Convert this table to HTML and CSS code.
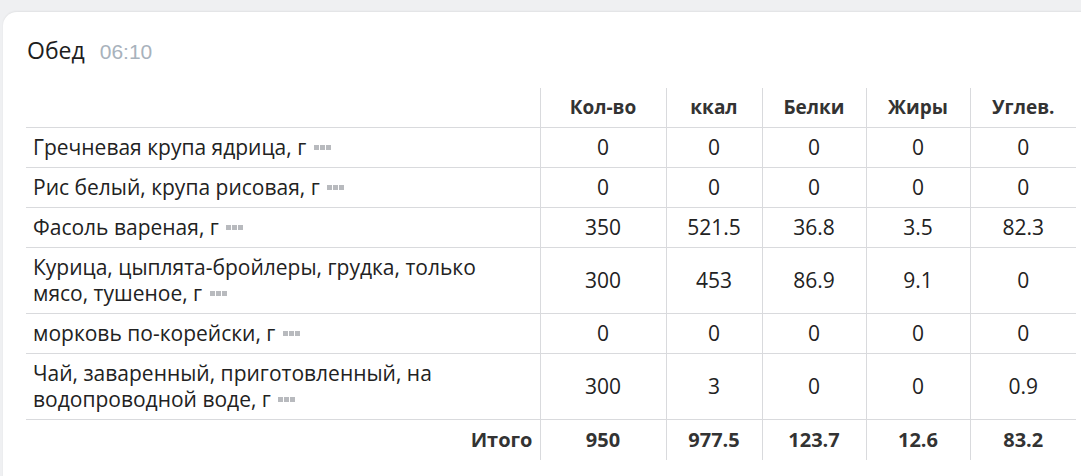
FILE: index.html
```html
<!DOCTYPE html>
<html lang="ru">
<head>
<meta charset="utf-8">
<title>Обед</title>
<link rel="stylesheet" href="styles.css">
</head>
<body>
<div class="page">
  <section class="card">
    <header class="card-head">
      <h2 class="meal-title">Обед</h2>
      <span class="meal-time">06:10</span>
    </header>
    <table class="food-table">
      <colgroup>
        <col class="c-name"><col class="c-qty"><col class="c-kcal"><col class="c-prot"><col class="c-fat"><col class="c-carb">
      </colgroup>
      <thead>
        <tr><th></th><th>Кол-во</th><th>ккал</th><th>Белки</th><th>Жиры</th><th>Углев.</th></tr>
      </thead>
      <tbody>
        <tr><td class="name">Гречневая крупа ядрица, г <span class="more"><i></i><i></i><i></i></span></td><td>0</td><td>0</td><td>0</td><td>0</td><td>0</td></tr>
        <tr><td class="name">Рис белый, крупа рисовая, г <span class="more"><i></i><i></i><i></i></span></td><td>0</td><td>0</td><td>0</td><td>0</td><td>0</td></tr>
        <tr><td class="name">Фасоль вареная, г <span class="more"><i></i><i></i><i></i></span></td><td>350</td><td>521.5</td><td>36.8</td><td>3.5</td><td>82.3</td></tr>
        <tr><td class="name">Курица, цыплята-бройлеры, грудка, только мясо, тушеное, г <span class="more"><i></i><i></i><i></i></span></td><td>300</td><td>453</td><td>86.9</td><td>9.1</td><td>0</td></tr>
        <tr><td class="name">морковь по-корейски, г <span class="more"><i></i><i></i><i></i></span></td><td>0</td><td>0</td><td>0</td><td>0</td><td>0</td></tr>
        <tr><td class="name">Чай, заваренный, приготовленный, на водопроводной воде, г <span class="more"><i></i><i></i><i></i></span></td><td>300</td><td>3</td><td>0</td><td>0</td><td>0.9</td></tr>
      </tbody>
      <tfoot>
        <tr><td class="total-label">Итого</td><td>950</td><td>977.5</td><td>123.7</td><td>12.6</td><td>83.2</td></tr>
      </tfoot>
    </table>
  </section>
</div>
</body>
</html>
```
FILE: styles.css
```css
html, body {
  margin: 0;
  padding: 0;
  background: #eff0f2;
  overflow: hidden;
}
.page {
  padding: 12px 0 0 3px;
  width: 1110px;
}
.card {
  background: #fff;
  border-radius: 14px 0 0 0;
  box-shadow: 0 -1px 2px rgba(0,0,0,0.06);
  padding: 22px 0 40px 23px;
  font-family: "Open Sans", "Noto Sans", sans-serif;
  color: #222;
}
.card-head {
  display: flex;
  align-items: baseline;
  gap: 15px;
  padding-left: 1px;
  margin-bottom: 22px;
}
.meal-title {
  margin: 0;
  font-size: 23px;
  font-weight: 400;
  line-height: 32px;
  color: #1d1d1d;
}
.meal-time {
  font-family: "Liberation Sans", Arial, sans-serif;
  font-size: 21px;
  color: #a8b2bc;
}
.food-table {
  border-collapse: collapse;
  table-layout: fixed;
  width: 1050px;
  font-size: 21px;
  line-height: 26px;
}
.c-name { width: 514px; }
.c-qty { width: 126px; }
.c-kcal { width: 96px; }
.c-prot { width: 104px; }
.c-fat { width: 104px; }
.c-carb { width: 106px; }
.food-table th,
.food-table td {
  padding: 6px 7px 7px 7px;
  text-align: center;
  border-left: 1px solid #d9dadd;
  vertical-align: middle;
}
.food-table th:first-child,
.food-table td:first-child {
  border-left: none;
}
.food-table th {
  font-weight: 700;
  font-size: 19px;
  color: #333;
}
.food-table tbody td,
.food-table thead th {
  border-bottom: 1px solid #d9dadd;
}
.food-table td.name {
  text-align: left;
  padding-right: 30px;
}
.more {
  display: inline-flex;
  gap: 1px;
  vertical-align: middle;
  margin-left: 2px;
  position: relative;
  top: -2px;
}
.more i {
  display: block;
  width: 5px;
  height: 5px;
  background: #b8babe;
}
.food-table tfoot td {
  font-weight: 700;
  font-size: 20px;
  color: #333;
  padding-top: 7px;
}
.food-table td.total-label {
  text-align: right;
}
```
